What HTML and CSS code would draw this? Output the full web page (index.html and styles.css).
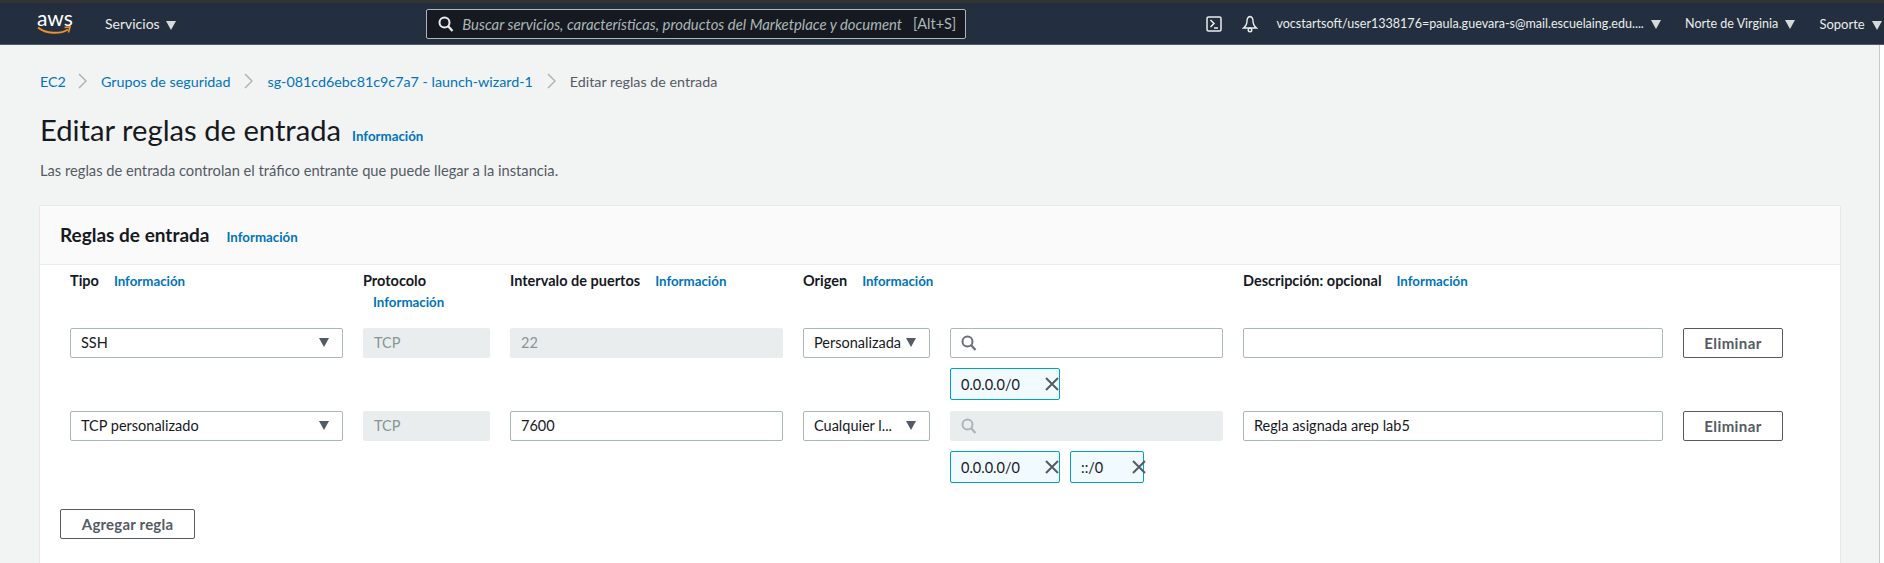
FILE: index.html
```html
<!DOCTYPE html>
<html lang="es">
<head>
    <meta charset="UTF-8">
    <title>Editar reglas de entrada</title>
    <link rel="stylesheet" href="styles.css">
</head>
<body>

<header class="topbar">
    <div class="logo">
        <span class="logo-text">aws</span>
        <svg class="logo-smile" width="34" height="9" viewBox="0 0 34 9">
            <path d="M1 1.5C9 8 23 8.5 31 3.5" fill="none" stroke="#ec912d" stroke-width="2"/>
            <path d="M27.500 1.500L33 1 31.500 6.500" fill="none" stroke="#ec912d" stroke-width="1.600"/>
        </svg>
    </div>
    <span class="nav-item nav-services">Servicios <i class="caret"></i></span>
    <div class="search">
        <svg class="search-icon" width="16" height="16" viewBox="0 0 16 16">
            <circle cx="6.500" cy="6.500" r="5" fill="none" stroke="#eaeded" stroke-width="2"/>
            <path d="M10 10L14.500 15" stroke="#eaeded" stroke-width="2.200"/>
        </svg>
        <span class="search-text">Buscar servicios, características, productos del Marketplace y document</span>
        <span class="search-key">[Alt+S]</span>
    </div>
    <div class="nav-right">
        <svg class="terminal-icon" width="16" height="16" viewBox="0 0 16 16">
            <rect x="1" y="1" width="14" height="14" rx="1.500" fill="none" stroke="#eaeded" stroke-width="1.500"/>
            <path d="M4.500 4L8 7.500 4.500 11M8 12H12" fill="none" stroke="#eaeded" stroke-width="1.500"/>
        </svg>
        <svg class="bell-icon" width="16" height="18" viewBox="0 0 16 18">
            <path d="M8 1.500C5.500 2 5 4 5 6C5 9 4 11 1.500 13H14.500C12 11 11 9 11 6C11 4 10.500 2 8 1.500Z" fill="none" stroke="#eaeded" stroke-width="1.400"/>
            <circle cx="8" cy="15" r="1.800" fill="none" stroke="#eaeded" stroke-width="1.400"/>
        </svg>
        <span class="nav-item nav-user">vocstartsoft/user1338176=paula.guevara-s@mail.escuelaing.edu.... <i class="caret"></i></span>
        <span class="nav-item nav-region">Norte de Virginia <i class="caret"></i></span>
        <span class="nav-item nav-support">Soporte <i class="caret"></i></span>
    </div>
</header>

<main class="content">
    <nav class="breadcrumbs">
        <a>EC2</a>
        <svg class="crumb-sep" width="9" height="16" viewBox="0 0 9 16"><path d="M1 1L8 8 1 15" fill="none" stroke="#aab7b8" stroke-width="1.500"/></svg>
        <a>Grupos de seguridad</a>
        <svg class="crumb-sep" width="9" height="16" viewBox="0 0 9 16"><path d="M1 1L8 8 1 15" fill="none" stroke="#aab7b8" stroke-width="1.500"/></svg>
        <a>sg-081cd6ebc81c9c7a7 - launch-wizard-1</a>
        <svg class="crumb-sep" width="9" height="16" viewBox="0 0 9 16"><path d="M1 1L8 8 1 15" fill="none" stroke="#aab7b8" stroke-width="1.500"/></svg>
        <span>Editar reglas de entrada</span>
    </nav>

    <div class="page-title">
        <h1>Editar reglas de entrada</h1>
        <a class="info">Información</a>
    </div>
    <p class="page-desc">Las reglas de entrada controlan el tráfico entrante que puede llegar a la instancia.</p>

    <section class="card">
        <div class="card-header">
            <h2>Reglas de entrada</h2>
            <a class="info">Información</a>
        </div>
        <div class="card-body">
            <div class="rules labels">
                <div class="label"><b>Tipo</b><a class="info">Información</a></div>
                <div class="label label-wrap"><b>Protocolo</b><a class="info">Información</a></div>
                <div class="label"><b>Intervalo de puertos</b><a class="info">Información</a></div>
                <div class="label"><b>Origen</b><a class="info">Información</a></div>
                <div></div>
                <div class="label"><b>Descripción: opcional</b><a class="info">Información</a></div>
                <div></div>
            </div>

            <div class="rules rule-row">
                <div class="field select">SSH<i class="caret dark"></i></div>
                <div class="field disabled">TCP</div>
                <div class="field disabled">22</div>
                <div class="field select">Personalizada<i class="caret dark"></i></div>
                <div class="cidr">
                    <div class="field search-field">
                        <svg width="16" height="16" viewBox="0 0 16 16"><circle cx="6.500" cy="6.500" r="5" fill="none" stroke="#687078" stroke-width="2"/><path d="M10 10L14.500 15" stroke="#687078" stroke-width="2.200"/></svg>
                    </div>
                    <div class="tokens">
                        <div class="token">0.0.0.0/0<svg class="token-x" width="14" height="14" viewBox="0 0 14 14"><path d="M1 1L13 13M13 1L1 13" stroke="#545b64" stroke-width="2"/></svg></div>
                    </div>
                </div>
                <div class="field"></div>
                <button class="btn">Eliminar</button>
            </div>

            <div class="rules rule-row">
                <div class="field select">TCP personalizado<i class="caret dark"></i></div>
                <div class="field disabled">TCP</div>
                <div class="field">7600</div>
                <div class="field select">Cualquier l...<i class="caret dark"></i></div>
                <div class="cidr">
                    <div class="field disabled search-field">
                        <svg width="16" height="16" viewBox="0 0 16 16"><circle cx="6.500" cy="6.500" r="5" fill="none" stroke="#aab7b8" stroke-width="2"/><path d="M10 10L14.500 15" stroke="#aab7b8" stroke-width="2.200"/></svg>
                    </div>
                    <div class="tokens">
                        <div class="token">0.0.0.0/0<svg class="token-x" width="14" height="14" viewBox="0 0 14 14"><path d="M1 1L13 13M13 1L1 13" stroke="#545b64" stroke-width="2"/></svg></div>
                        <div class="token token-small">::/0<svg class="token-x" width="14" height="14" viewBox="0 0 14 14"><path d="M1 1L13 13M13 1L1 13" stroke="#545b64" stroke-width="2"/></svg></div>
                    </div>
                </div>
                <div class="field">Regla asignada arep lab5</div>
                <button class="btn">Eliminar</button>
            </div>

            <button class="btn btn-add">Agregar regla</button>
        </div>
    </section>
</main>

</body>
</html>
```

FILE: styles.css
```css
* {
    box-sizing: border-box;
}

html, body {
    height: 100%;
}

body {
    display: flex;
    flex-direction: column;
    margin: 0;
    overflow: hidden;
    background-color: #fff;
    color: #16191f;
    font-family: 'Lato', 'Open Sans', sans-serif;
    font-size: 14.500px;
}

a {
    color: #0073bb;
}

.topbar {
    display: flex;
    flex: none;
    align-items: center;
    height: 45px;
    padding: 0 2px 0 37px;
    background-color: #232f3e;
    border-top: 3px solid #333;
    border-bottom: 1px solid #545b64;
    color: #eaeded;
}

.logo {
    display: flex;
    flex-direction: column;
    width: 34px;
    margin-top: -2px;
}

.logo-text {
    height: 15px;
    color: #fff;
    font-size: 21px;
    line-height: 14px;
    text-align: center;
}

.logo-smile {
    display: block;
}

.nav-item {
    font-size: 12.500px;
    white-space: nowrap;
}

.nav-services {
    margin-left: 34px;
    font-size: 14px;
}

.caret {
    display: inline-block;
    width: 0;
    height: 0;
    margin-left: 3px;
    border-left: 5.500px solid transparent;
    border-right: 5.500px solid transparent;
    border-top: 9px solid #d5dbdb;
    vertical-align: -1px;
}

.caret.dark {
    border-top-color: #545b64;
}

.search {
    display: flex;
    align-items: center;
    width: 540px;
    height: 30px;
    margin-left: 250px;
    padding: 0 9px 0 11px;
    background-color: #16191f;
    border: 1px solid #aab7b8;
    border-radius: 2px;
}

.search-icon {
    flex: none;
}

.search-text {
    flex: 1;
    min-width: 0;
    margin-left: 8px;
    color: #aab7b8;
    font-size: 14.900px;
    font-style: italic;
    white-space: nowrap;
}

.search-key {
    color: #aab7b8;
    font-size: 14.500px;
}

.nav-right {
    display: flex;
    align-items: center;
    margin-left: auto;
}

.nav-right .caret {
    margin-left: 4px;
    border-left-width: 5px;
    border-right-width: 5px;
}

.bell-icon {
    margin-left: 20px;
}

.nav-user {
    margin-left: 18px;
    font-size: 12.550px;
}

.nav-region {
    margin-left: 24px;
}

.nav-support {
    margin-left: 24px;
    font-size: 13px;
}

.content {
    display: flex;
    flex: 1;
    flex-direction: column;
    width: 1880px;
    padding: 26px 39px 0 40px;
    background-color: #f2f3f3;
    border-right: 1px solid #c8c8c8;
}

.breadcrumbs {
    display: flex;
    align-items: center;
    gap: 14px;
    height: 20px;
    color: #545b64;
    font-size: 14.300px;
}

.breadcrumbs a:first-child {
    margin-right: -2px;
}

.page-title {
    display: flex;
    align-items: baseline;
    margin-top: 21px;
}

.page-title h1 {
    margin: 0;
    font-size: 29.200px;
    font-weight: 400;
    line-height: 36px;
}

.page-title .info {
    margin-left: 11px;
}

.info {
    color: #0073bb;
    font-size: 13.300px;
    font-weight: 700;
}

.page-desc {
    margin: 12px 0 0;
    color: #545b64;
    font-size: 14.700px;
    line-height: 20px;
}

.card {
    display: flex;
    flex: 1;
    flex-direction: column;
    margin-top: 26px;
    background-color: #fff;
    box-shadow: 0 0 1px #aab7b8;
}

.card-header {
    display: flex;
    align-items: baseline;
    height: 59px;
    padding: 18px 20px 0;
    background-color: #fafafa;
    border-bottom: 1px solid #eaeded;
}

.card-header h2 {
    margin: 0;
    font-size: 19px;
    font-weight: 700;
    line-height: 22px;
}

.card-header .info {
    margin-left: 17px;
}

.card-body {
    padding: 6px 20px 0;
}

.rules {
    display: grid;
    grid-template-columns: 273px 127px 273px 127px 273px 420px 100px;
    column-gap: 20px;
    margin-left: 10px;
}

.labels {
    height: 57px;
}

.label {
    line-height: 20px;
}

.label b {
    margin-right: 15px;
    font-weight: 700;
}

.label-wrap .info {
    display: block;
    margin: 1px 0 0 10px;
}

.rule-row {
    align-items: start;
    height: 83px;
}

.field {
    position: relative;
    height: 30px;
    padding: 0 10px;
    overflow: hidden;
    background-color: #fff;
    border: 1px solid #aab7b8;
    border-radius: 2px;
    line-height: 28px;
    white-space: nowrap;
}

.field.disabled {
    background-color: #eaeded;
    border-color: #eaeded;
    color: #879596;
}

.select .caret {
    position: absolute;
    top: 9px;
    right: 13px;
    margin: 0;
}

.search-field {
    display: flex;
    align-items: center;
}

.tokens {
    display: flex;
    gap: 10px;
    margin-top: 10px;
}

.token {
    display: flex;
    align-items: center;
    justify-content: space-between;
    width: 110px;
    height: 32px;
    padding-left: 10px;
    background-color: #f1faff;
    border: 1px solid #00a1c9;
    border-radius: 2px;
}

.token-small {
    width: 74px;
}

.token-x {
    flex: none;
}

.token-small .token-x {
    margin-right: -3px;
}

.btn {
    height: 30px;
    padding: 0;
    background-color: #fff;
    border: 1px solid #545b64;
    border-radius: 2px;
    color: #545b64;
    font-family: inherit;
    font-size: 15px;
    font-weight: 700;
    letter-spacing: 0.400px;
}

.btn-add {
    display: block;
    width: 135px;
    margin-top: 15px;
    letter-spacing: 0.200px;
}
```
